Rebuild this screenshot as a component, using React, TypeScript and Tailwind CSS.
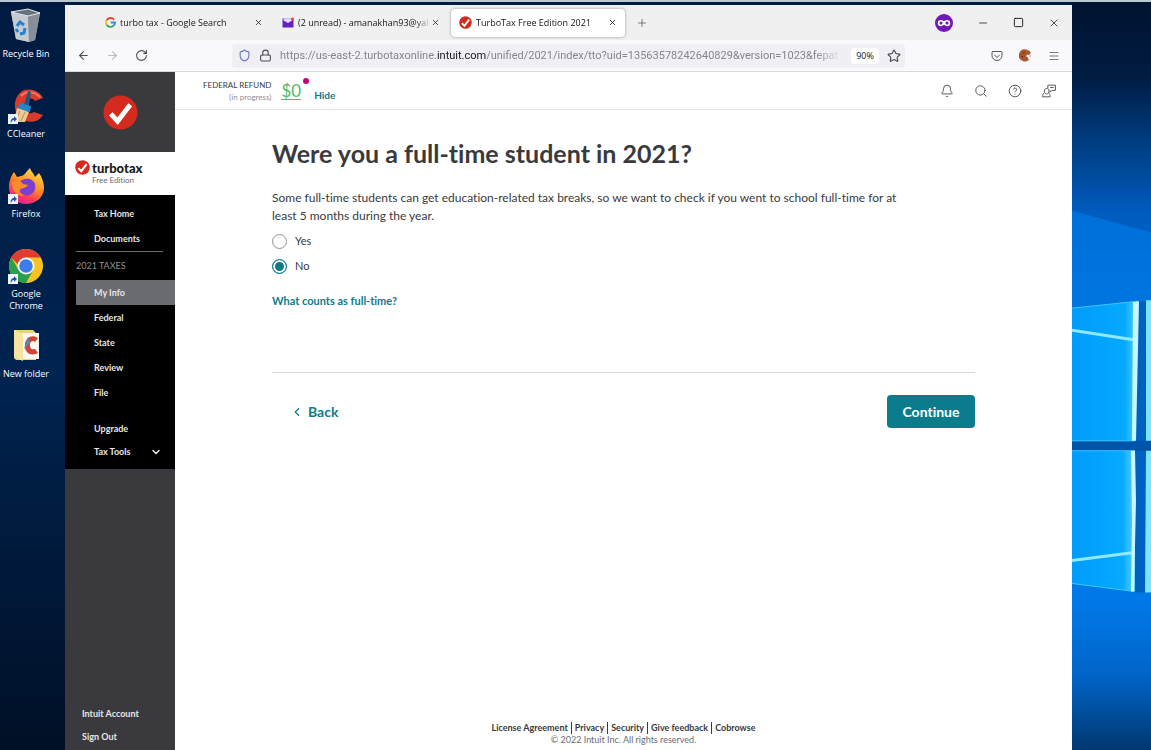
import React, { useState } from "react";
import { ArrowLeft, ArrowRight, Bell, ChevronDown, ChevronLeft, CircleHelp, Lock, Menu, Minus, Plus, RotateCw, Search, Shield, Square, Star, X } from "lucide-react";

interface DesktopItem {
  name: string;
  icon: React.ComponentType;
  shortcut: boolean;
}

interface BrowserTab {
  title: string;
  icon: React.ReactNode;
  active: boolean;
}

function RecycleBinIcon() {
  return (
    <svg viewBox="0 0 36 36" className="w-9 h-9">
      <path d="M3 4 20 1 32 5 27 32 21 34 8 31Z" fill="#a9b0b8" />
      <path d="M3 4 20 8 21 34 8 31Z" fill="#c6cbd0" />
      <path d="M20 8 32 5 27 32 21 34Z" fill="#878e98" />
      <path d="M3 4 20 1 32 5 20 8Z" fill="#69727c" stroke="#dfe4e8" strokeWidth="1" />
      <path d="m9 18 3-4 4 3M17 20l-1 5-4 1M10 24l-2-3" fill="none" stroke="#2381d2" strokeWidth="3" />
    </svg>
  );
}

function CCleanerIcon() {
  return (
    <svg viewBox="0 0 36 36" className="w-9 h-9">
      <path d="M35 10C31 2 20-1 13 4 5 10 5 24 12 30c7 6 18 5 23-3l-9-3c-4 3-9 1-9-6 0-7 6-10 10-5Z" fill="#d83a2c" />
      <path d="M32 9C27 4 19 2 13 8" fill="none" stroke="#ee7b69" strokeWidth="2" />
      <path d="m20 3 3 1-2 14-5-1Z" fill="#29537a" />
      <path d="m12 15 11 3-1 6-13-3Z" fill="#2685c7" />
      <path d="m9 20 12 4-4 10H3c4-4 5-9 6-14Z" fill="#efc996" />
      <path d="m12 23-4 9M17 24l-4 9" stroke="#bd8c55" />
    </svg>
  );
}

function FirefoxIcon() {
  return (
    <svg viewBox="0 0 36 36" className="w-9 h-9">
      <defs>
        <linearGradient id="fox" x1="0.8" y1="0" x2="0.3" y2="1">
          <stop offset="0" stopColor="#ffe44a" />
          <stop offset="0.45" stopColor="#ff9426" />
          <stop offset="0.75" stopColor="#ff4050" />
          <stop offset="1" stopColor="#e0209a" />
        </linearGradient>
      </defs>
      <path d="M22 0c1 4 4 5 5 9l4-4c3 4 5 10 5 15 0 9-8 16-18 16S1 29 1 20C1 13 3 8 6 4l3 5 4-1c3 0 4-3 9-8Z" fill="url(#fox)" />
      <path d="M12 14c3-4 12-5 15 2 2 7-4 13-11 11-6-2-6-8-4-13Z" fill="#7c3fd0" />
      <path d="M4 14c5-3 9-1 11 2l5 1c-2 4-6 2-8 5-1 2 2 5 5 5-8 3-13-4-13-13Z" fill="#ff8a2b" />
    </svg>
  );
}

function ChromeIcon() {
  return (
    <svg viewBox="0 0 36 36" className="w-9 h-9">
      <circle cx="18" cy="18" r="17" fill="#f9c31f" />
      <path d="M3.3 9.5A17 17 0 0 0 18 35l7.400-13L18 18 10.600 22Z" fill="#2c9f4b" />
      <path d="M3.3 9.5A17 17 0 0 1 32.700 9.500H18l-7 8Z" fill="#e03c31" />
      <circle cx="18" cy="18" r="8.500" fill="#fff" />
      <circle cx="18" cy="18" r="6.800" fill="#3b7de9" />
    </svg>
  );
}

function FolderIcon() {
  return (
    <svg viewBox="0 0 36 36" className="w-9 h-9">
      <path d="M6 2h19l3 3v27H8l-2-2Z" fill="#ecd07d" />
      <path d="M13 5h18v26H13Z" fill="#faf7f3" />
      <path d="M30 10c-6-4-12-1-13 6-1 8 5 13 13 9l-3-4c-4 1-5-1-5-4 0-4 3-5 5-3Z" fill="#d04335" />
      <path d="m20 9 2 6-6 6Z" fill="#4990bf" />
      <path d="m6 2 9 4v27l-9-4Z" fill="#f8e3a0" />
    </svg>
  );
}

function CheckBadge({ className }: { className: string }) {
  return (
    <svg viewBox="0 0 36 36" className={className}>
      <circle cx="18" cy="18" r="17.500" fill="#d52b1e" />
      <path d="M8 19.500 15 27 28 10" fill="none" stroke="#fff" strokeWidth="5" />
    </svg>
  );
}

function GoogleIcon() {
  return (
    <svg viewBox="0 0 48 48" className="w-[11px] h-[11px] shrink-0">
      <path d="M40 12A20 20 0 0 0 7 14" fill="none" stroke="#ea4335" strokeWidth="8" />
      <path d="M7 14a20 20 0 0 0 0 20" fill="none" stroke="#fbbc05" strokeWidth="8" />
      <path d="M7 34a20 20 0 0 0 30 4" fill="none" stroke="#34a853" strokeWidth="8" />
      <path d="M37 38a20 20 0 0 0 7-14H25" fill="none" stroke="#4285f4" strokeWidth="8" />
    </svg>
  );
}

function MailIcon() {
  return (
    <svg viewBox="0 0 24 24" className="w-3 h-3 shrink-0">
      <path d="M1 3h22v18H1Z" fill="#6420c4" />
      <path d="M3 3h17v4l-8 5-9-5Z" fill="#e7d9fa" />
      <circle cx="21" cy="4" r="3" fill="#f0433f" />
    </svg>
  );
}

function MaskIcon() {
  return (
    <svg viewBox="0 0 20 20" className="w-[18px] h-[18px]">
      <circle cx="10" cy="10" r="10" fill="#7316b8" />
      <path d="M10 8C7.500 6 3 6 3 10s4 4.500 7 2c3 2.500 7 2 7-2s-4.500-4-7-2Z" fill="#fff" />
      <circle cx="6.700" cy="10" r="1.700" fill="#7316b8" />
      <circle cx="13.300" cy="10" r="1.700" fill="#7316b8" />
    </svg>
  );
}

function PocketIcon() {
  return (
    <svg viewBox="0 0 24 24" className="w-3 h-3" fill="none" stroke="#55555f" strokeWidth="2" strokeLinecap="round">
      <path d="M4 3h16a2 2 0 0 1 2 2v6a10 10 0 0 1-20 0V5a2 2 0 0 1 2-2Z" />
      <path d="m7 10 5 5 5-5" />
    </svg>
  );
}

function CookieIcon() {
  return (
    <svg viewBox="0 0 24 24" className="w-[13px] h-[13px]">
      <path d="M13 1a11 11 0 1 0 6 18l-3-1 1-3-4-1 2-4 4 1 3-4-3-4Z" fill="#a9552e" />
      <circle cx="9" cy="7" r="1.500" fill="#5b2a14" />
      <circle cx="6" cy="14" r="1.500" fill="#5b2a14" />
      <circle cx="21" cy="13" r="1.500" fill="#c98762" />
    </svg>
  );
}

// Person with a speech bubble
function ExpertHelpIcon() {
  return (
    <svg viewBox="0 0 24 24" className="w-[14px] h-[14px]" fill="none" stroke="#55585c" strokeWidth="1.700" strokeLinejoin="round">
      <path d="M10 7V2h13v9h-6l-3 3v-3" />
      <path d="M14 6h6" />
      <path d="M4 12c0-6 8-6 8 0 0 3-2 5-4 5s-4-2-4-5Z" />
      <path d="M4 15c-2 2-3 4-3 7h13c0-3-1-5-3-7" />
    </svg>
  );
}

// Light coming through the window panes on the right of the desktop
function Wallpaper() {
  return (
    <svg viewBox="0 0 79 750" preserveAspectRatio="none" className="absolute inset-0 w-full h-full" aria-hidden="true">
      <defs>
        <linearGradient id="sky" x1="0" y1="0" x2="0" y2="1">
          <stop offset="0" stopColor="#00132f" />
          <stop offset="0.1" stopColor="#001c42" />
          <stop offset="0.18" stopColor="#003a7c" />
          <stop offset="0.28" stopColor="#005bbd" />
          <stop offset="0.42" stopColor="#0072dd" />
          <stop offset="0.8" stopColor="#0079e8" />
          <stop offset="0.9" stopColor="#0065c8" />
          <stop offset="1" stopColor="#00376f" />
        </linearGradient>
        <linearGradient id="ray" x1="0" y1="0" x2="0" y2="1">
          <stop offset="0" stopColor="#006fd8" />
          <stop offset="1" stopColor="#0076e2" />
        </linearGradient>
        <linearGradient id="pane" x1="0" y1="0" x2="1" y2="0">
          <stop offset="0" stopColor="#009bfb" />
          <stop offset="0.8" stopColor="#05aaff" />
          <stop offset="1" stopColor="#5bd0ff" />
        </linearGradient>
      </defs>
      <path d="M0 0H79V750H0Z" fill="url(#sky)" />
      <path d="M0 209 79 231V320H0Z" fill="url(#ray)" />
      <path d="M62 300H79V592H62Z" fill="#0062c0" />
      <path d="M0 440H79V450H0Z" fill="#0055ab" />
      <path d="M0 307 66 300 63 440H0Z" fill="url(#pane)" />
      <path d="M0 450H63V591L0 583Z" fill="url(#pane)" />
      <path d="M0 329 63 339M0 560 62 552" stroke="#8feaff" strokeWidth="3" />
      <path d="M0 307 66 300M0 440H63M0 450H63M0 583 62 591" stroke="#3fc7ff" strokeWidth="1" />
      <path d="M61 301 67 300 64 440H60Z" fill="#c8f7ff" />
      <path d="M59 450H63L64 500 62 591H59L60 520Z" fill="#c8f7ff" />
      <path d="M74 299H79V440H74ZM74 450H79V592H73Z" fill="#7fe3ff" />
    </svg>
  );
}

const desktopItems: DesktopItem[] = [
  { name: "Recycle Bin", icon: RecycleBinIcon, shortcut: false },
  { name: "CCleaner", icon: CCleanerIcon, shortcut: true },
  { name: "Firefox", icon: FirefoxIcon, shortcut: true },
  { name: "Google Chrome", icon: ChromeIcon, shortcut: true },
  { name: "New folder", icon: FolderIcon, shortcut: false },
];

const tabs: BrowserTab[] = [
  { title: "turbo tax - Google Search", icon: <GoogleIcon />, active: false },
  { title: "(2 unread) - amanakhan93@yal", icon: <MailIcon />, active: false },
  { title: "TurboTax Free Edition 2021", icon: <CheckBadge className="w-[13px] h-[13px] shrink-0" />, active: true },
];

const taxLinks = ["My Info", "Federal", "State", "Review", "File"];
const footerLinks = ["License Agreement", "Privacy", "Security", "Give feedback", "Cobrowse"];

function Desktop() {
  return (
    <div className="w-[65px] shrink-0 pt-[6px] pr-[13px]">
      {desktopItems.map(({ name, icon: Icon, shortcut }) => (
        <button key={name} className="flex flex-col items-center w-full h-20 text-[9px] leading-3 text-white">
          <span className="relative mb-1">
            <Icon />
            {shortcut && (
              <svg viewBox="0 0 10 10" className="absolute left-0 bottom-0 w-[10px] h-[10px]">
                <path d="M0 0H10V10H0Z" fill="#f2f5f8" />
                <path d="M3 9C2 6 4 4 6 4V2l3 3-3 3V6C4 6 4 7 3 9Z" fill="#22559c" />
              </svg>
            )}
          </span>
          {name}
        </button>
      ))}
    </div>
  );
}

function BrowserChrome() {
  return (
    <div className="font-['Open_Sans',sans-serif] text-[#15141a]">
      <div className="flex items-center h-[35px] bg-[#f0f0f1] pl-8">
        {tabs.map((tab) => (
          <div
            key={tab.title}
            className={`flex items-center w-[174px] h-7 mr-[3px] pl-2 rounded-sm ${tab.active ? "bg-white shadow-[0_0_3px_rgba(0,0,0,0.4)]" : ""}`}
          >
            {tab.icon}
            <span className="flex-1 ml-1 whitespace-nowrap text-[9px] leading-4 [mask-image:linear-gradient(to_right,black_88%,transparent)]">
              {tab.title}
            </span>
            <button aria-label="Close tab" className="pr-2">
              <X className="w-[9px] h-[9px]" />
            </button>
          </div>
        ))}
        <button aria-label="New tab" className="ml-2">
          <Plus className="w-3 h-3 text-[#55555f]" strokeWidth={1.5} />
        </button>
        <div className="flex items-center gap-6 ml-auto mr-3">
          <MaskIcon />
          <button aria-label="Minimize"><Minus className="w-3 h-3" strokeWidth={1.5} /></button>
          <button aria-label="Maximize"><Square className="w-[11px] h-[11px]" strokeWidth={2} /></button>
          <button aria-label="Close"><X className="w-3 h-3" strokeWidth={1.5} /></button>
        </div>
      </div>

      <div className="flex items-center h-8 bg-[#f9f9fb] border-b border-[#d9d9de] px-3 text-[#4b4b54]">
        <div className="flex gap-4 w-[155px]">
          <button aria-label="Back"><ArrowLeft className="w-[13px] h-[13px]" /></button>
          <button aria-label="Forward"><ArrowRight className="w-[13px] h-[13px] text-[#b9b9c0]" /></button>
          <button aria-label="Reload"><RotateCw className="w-[13px] h-[13px]" /></button>
        </div>
        <div className="flex items-center flex-1 min-w-0 max-w-[673px] h-6 pl-[6px] pr-1 rounded-sm bg-[#f0f0f4]">
          <Shield className="w-[13px] h-[13px] shrink-0 text-[#6673c0]" />
          <Lock className="w-[13px] h-[13px] shrink-0 ml-2" />
          <div
            role="textbox"
            aria-label="Address"
            className="flex-1 mx-2 whitespace-nowrap font-['Roboto',sans-serif] text-[11px] leading-4 text-[#85858e] [mask-image:linear-gradient(to_right,black_95%,transparent)]"
          >
            https://us-east-2.turbotaxonline.<span className="text-[#15141a]">intuit.com</span>/unified/2021/index/tto?uid=13563578242640829&amp;version=1023&amp;fepat
          </div>
          <button className="w-7 h-4 rounded-sm bg-white text-[9px] leading-4 text-[#15141a]">90%</button>
          <button aria-label="Bookmark" className="ml-2"><Star className="w-[14px] h-[14px]" /></button>
        </div>
        <div className="flex items-center gap-4 ml-auto">
          <button aria-label="Save to Pocket"><PocketIcon /></button>
          <button aria-label="Cookies"><CookieIcon /></button>
          <button aria-label="Menu"><Menu className="w-3 h-3" strokeWidth={1.5} /></button>
        </div>
      </div>
    </div>
  );
}

function Sidebar() {
  return (
    <aside className="flex flex-col w-[110px] shrink-0 bg-[#39393e] text-[9px] font-bold text-[#e6e6e6]">
      <div className="flex items-center justify-center h-20">
        <CheckBadge className="w-[35px] h-[35px]" />
      </div>
      <div className="flex items-start h-[43px] bg-white pl-[10px] pt-2">
        <CheckBadge className="w-[15px] h-[15px]" />
        <div className="ml-[2px]">
          <p className="text-[13px] leading-4 font-black text-[#1c1c1c]">turbotax</p>
          <p className="text-[8px] leading-2 font-normal text-[#6b6c72]">Free Edition</p>
        </div>
      </div>

      <nav className="bg-black pt-[6px] pb-[6px] pl-[11px]">
        <a href="#home" className="block pl-[18px] leading-[25px]">Tax Home</a>
        <a href="#documents" className="block pl-[18px] leading-[25px]">Documents</a>
        <p className="mr-3 border-t border-[#6b6c72] pt-1 leading-5 font-normal text-[#8d9096] mb-1">2021 TAXES</p>
        {taxLinks.map((link) => (
          <a key={link} href="#taxes" className={`block pl-[18px] leading-[25px] ${link === "My Info" ? "bg-[#6b6c72]" : ""}`}>
            {link}
          </a>
        ))}
        <a href="#upgrade" className="block mt-3 pl-[18px] leading-[23px]">Upgrade</a>
        <button className="flex items-center justify-between w-full pl-[18px] pr-[13px] leading-[23px]">
          Tax Tools
          <ChevronDown className="w-3 h-3" strokeWidth={3} />
        </button>
      </nav>

      <div className="mt-auto pl-[17px] pb-[2px]">
        <a href="#account" className="block leading-[23px]">Intuit Account</a>
        <a href="#signout" className="block leading-[23px]">Sign Out</a>
      </div>
    </aside>
  );
}

export default function App() {
  const [student, setStudent] = useState("No");

  return (
    <div className="flex flex-col min-h-screen bg-[#001c42] font-['Open_Sans',sans-serif]">
      <div className="h-[2px] bg-[#b9c9d2]" />
      <div className="flex flex-1 bg-linear-to-b from-[#001a40] via-[#002350] to-[#001026]">
        <Desktop />

        <div className="flex flex-col flex-1 min-w-0 mt-[3px] bg-white">
          <BrowserChrome />

          <div className="flex flex-1 font-['Lato',sans-serif] [font-variant-ligatures:none]">
            <Sidebar />

            <div className="flex flex-col flex-1 min-w-0 text-[#393a3d]">
              <header className="flex items-center h-[38px] border-b border-[#e3e5e8] pl-7 pr-4">
                <div className="text-right text-[8px] leading-3">
                  <p>FEDERAL REFUND</p>
                  <p className="text-[#8d9096]">(in progress)</p>
                </div>
                <p className="relative ml-[10px] border-b border-[#53b86a] text-[17px] leading-[17px] text-[#53b86a]">
                  $0
                  <span className="absolute -right-2 -top-1 w-[6px] h-[6px] rounded-full bg-[#c9007a]" />
                </p>
                <button className="ml-[13px] mt-2 text-[10px] leading-4 font-bold text-[#0b7c8c]">Hide</button>
                <div className="flex items-center gap-5 ml-auto text-[#55585c]">
                  <button aria-label="Notifications"><Bell className="w-[14px] h-[14px]" strokeWidth={1.7} /></button>
                  <button aria-label="Search"><Search className="w-[14px] h-[14px]" strokeWidth={1.7} /></button>
                  <button aria-label="Help"><CircleHelp className="w-[14px] h-[14px]" strokeWidth={1.7} /></button>
                  <button aria-label="Talk to an expert"><ExpertHelpIcon /></button>
                </div>
              </header>

              <main className="px-[97px] pt-[27px]">
                <h1 className="text-[25px] leading-8 font-bold">Were you a full-time student in 2021?</h1>
                <p className="max-w-[625px] mt-5 text-[12px] leading-[18px]">
                  Some full-time students can get education-related tax breaks, so we want to check if you went to school full-time for at least 5 months during the year.
                </p>
                <fieldset className="mt-1" aria-label="Full-time student">
                  {["Yes", "No"].map((option) => (
                    <label key={option} className="flex items-center gap-2 h-[25px] text-[11px]">
                      <input
                        type="radio"
                        name="student"
                        checked={student === option}
                        onChange={() => setStudent(option)}
                        className="appearance-none w-[15px] h-[15px] rounded-full border border-[#8d9096] bg-white checked:border-[#0b7c8c] checked:bg-[#0b7c8c] checked:shadow-[inset_0_0_0_2px_white]"
                      />
                      {option}
                    </label>
                  ))}
                </fieldset>
                <a href="#full-time" className="block w-fit mt-3 text-[11px] leading-5 font-bold text-[#0b7c8c]">What counts as full-time?</a>

                <div className="flex items-center justify-between mt-[61px] pt-[22px] border-t border-[#d4d7dc]">
                  <button className="flex items-center gap-1 ml-[18px] text-[14px] font-bold text-[#0b7c8c]">
                    <ChevronLeft className="w-[14px] h-[14px]" />
                    Back
                  </button>
                  <button className="w-[88px] h-[33px] rounded-sm bg-[#0b7c8c] text-[14px] font-bold text-white">Continue</button>
                </div>
              </main>

              <footer className="mt-auto pb-1 text-center text-[9px] leading-3">
                <div className="flex justify-center divide-x divide-[#393a3d]">
                  {footerLinks.map((link) => (
                    <a key={link} href="#footer" className="px-[3px] font-bold">{link}</a>
                  ))}
                </div>
                <p className="text-[#6b6c72]">© 2022 Intuit Inc. All rights reserved.</p>
              </footer>
            </div>
          </div>
        </div>

        <div className="relative w-[79px] shrink-0">
          <Wallpaper />
        </div>
      </div>
    </div>
  );
}
